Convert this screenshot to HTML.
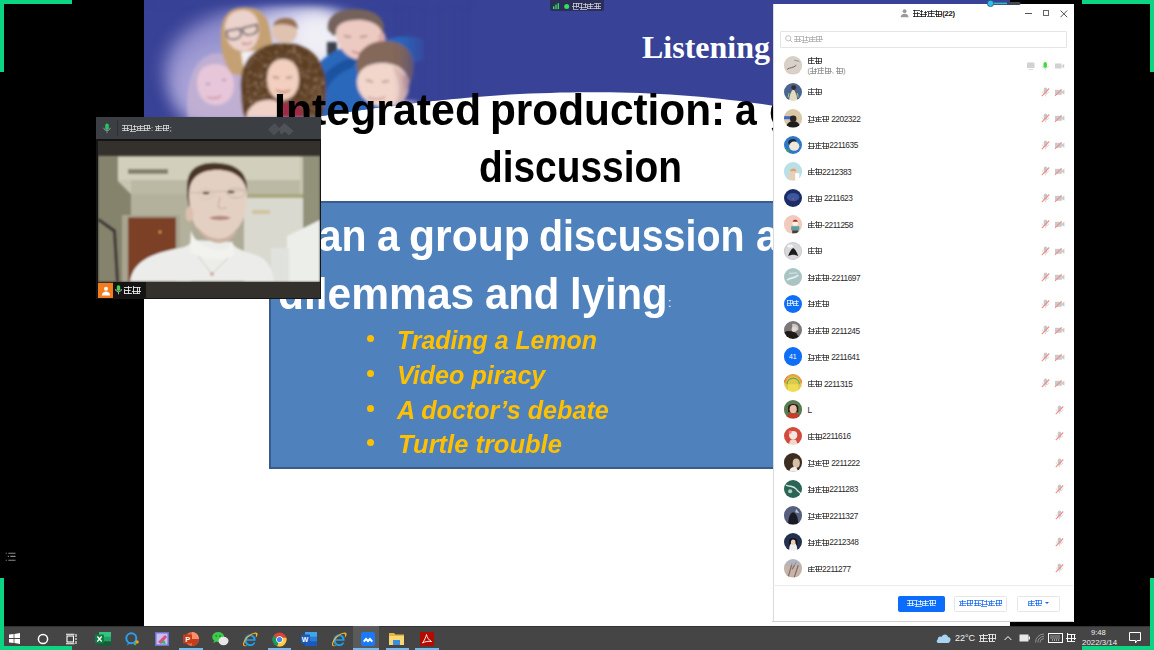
<!DOCTYPE html>
<html><head><meta charset="utf-8">
<style>
*{margin:0;padding:0;box-sizing:border-box}
html,body{width:1154px;height:650px;overflow:hidden;background:#000;font-family:"Liberation Sans",sans-serif}
.abs{position:absolute}
#slide{position:absolute;left:144px;top:0;width:866px;height:626px;background:#fff;overflow:hidden}
.g{position:absolute;background:#0bd582}
#taskbar{position:absolute;left:0;top:626px;width:1154px;height:24px;background:#454545}
#panel{position:absolute;left:773px;top:4px;width:301px;height:618px;background:#fff;box-shadow:inset 1px 0 0 #dadada}
#cam{position:absolute;left:96px;top:117px;width:225px;height:182px;background:#151515}
.t{position:absolute;white-space:nowrap;line-height:1}
.w{position:absolute;white-space:nowrap;line-height:1;transform-origin:0 0}
.dot{position:absolute;left:223px;width:7.2px;height:7.2px;border-radius:50%;background:#ffc000}
#panel .abs{position:absolute}
.pt{position:absolute;white-space:nowrap;line-height:1}
.c{display:inline-block;width:0.96em;height:0.9em;margin-right:0.02em;vertical-align:-0.05em;font-style:normal}
.c0{background:linear-gradient(currentColor,currentColor) 0 0.05em/100% 0.095em no-repeat,linear-gradient(currentColor,currentColor) 0 0.42em/100% 0.095em no-repeat,linear-gradient(currentColor,currentColor) 0 0.78em/100% 0.1em no-repeat,linear-gradient(currentColor,currentColor) 0.25em 0/0.1em 100% no-repeat,linear-gradient(currentColor,currentColor) 0.62em 0.2em/0.1em 80% no-repeat}
.c1{background:linear-gradient(currentColor,currentColor) 0.05em 0.1em/85% 0.095em no-repeat,linear-gradient(currentColor,currentColor) 0 0.5em/100% 0.095em no-repeat,linear-gradient(currentColor,currentColor) 0.1em 0.8em/80% 0.095em no-repeat,linear-gradient(currentColor,currentColor) 0.1em 0/0.1em 100% no-repeat,linear-gradient(currentColor,currentColor) 0.48em 0.1em/0.1em 90% no-repeat,linear-gradient(currentColor,currentColor) 0.78em 0.1em/0.1em 70% no-repeat}
.c2{background:linear-gradient(currentColor,currentColor) 0 0.15em/100% 0.095em no-repeat,linear-gradient(currentColor,currentColor) 0.2em 0.45em/70% 0.095em no-repeat,linear-gradient(currentColor,currentColor) 0 0.79em/100% 0.095em no-repeat,linear-gradient(currentColor,currentColor) 0.45em 0/0.1em 100% no-repeat,linear-gradient(currentColor,currentColor) 0.1em 0.3em/0.1em 60% no-repeat}
.c3{background:linear-gradient(currentColor,currentColor) 0 0.08em/45% 0.095em no-repeat,linear-gradient(currentColor,currentColor) 0.5em 0.2em/50% 0.095em no-repeat,linear-gradient(currentColor,currentColor) 0 0.55em/100% 0.095em no-repeat,linear-gradient(currentColor,currentColor) 0.05em 0.82em/90% 0.1em no-repeat,linear-gradient(currentColor,currentColor) 0.2em 0/0.1em 100% no-repeat,linear-gradient(currentColor,currentColor) 0.7em 0.1em/0.1em 85% no-repeat}
.av{position:absolute;left:10.6px;width:18.4px;height:18.4px;border-radius:50%;overflow:hidden}
.btn{position:absolute;height:16px;border:1px solid #e6e6e6;border-radius:1.5px;font-size:7.4px;line-height:14px;text-align:center;white-space:nowrap}
.dg{font-size:8.3px;letter-spacing:-0.45px;color:#2a2a2a}
</style></head><body>
<div id="slide">
  <svg class="abs" style="left:0;top:0" width="866" height="300" viewBox="144 0 866 300">
    <defs>
      <filter id="b3" x="-50%" y="-50%" width="200%" height="200%"><feGaussianBlur stdDeviation="3"/></filter>
      <filter id="b8" x="-50%" y="-50%" width="200%" height="200%"><feGaussianBlur stdDeviation="9"/></filter>
      <filter id="b1" x="-50%" y="-50%" width="200%" height="200%"><feGaussianBlur stdDeviation="1.5"/></filter>
      <clipPath id="hdr"><path d="M144 0 H1010 V172.2 L1010 172.2 L1000 168.1 L990 164.1 L980 160.2 L970 156.5 L960 152.9 L950 149.4 L940 146.0 L930 142.7 L920 139.6 L910 136.5 L900 133.6 L890 130.8 L880 128.1 L870 125.5 L860 123.0 L850 120.6 L840 118.3 L830 116.1 L820 114.1 L810 112.1 L800 110.2 L790 108.5 L780 106.8 L770 105.2 L760 103.7 L750 102.4 L740 101.1 L730 99.9 L720 98.8 L710 97.7 L700 96.8 L690 96.0 L680 95.2 L670 94.6 L660 94.0 L650 93.5 L640 93.1 L630 92.7 L620 92.5 L610 92.3 L600 92.2 L590 92.2 L580 92.3 L570 92.4 L560 92.6 L550 92.9 L540 93.2 L530 93.6 L520 94.1 L510 94.6 L500 95.3 L490 95.9 L480 96.7 L470 97.5 L460 98.4 L450 99.3 L440 100.3 L430 101.3 L420 102.4 L410 103.6 L400 104.8 L390 106.1 L380 107.4 L370 108.8 L360 110.2 L350 111.7 L340 113.2 L330 114.7 L320 116.3 L310 118.0 L300 119.7 L290 121.4 L280 123.2 L270 125.0 L260 126.9 L250 128.8 L240 130.7 L230 132.7 L220 134.7 L210 136.7 L200 138.8 L190 140.8 L180 143.0 L170 145.1 L160 147.3 L150 149.5 L144 150.8 Z"/></clipPath>
    </defs>
    <path d="M144 0 H1010 V172.2 L1010 172.2 L1000 168.1 L990 164.1 L980 160.2 L970 156.5 L960 152.9 L950 149.4 L940 146.0 L930 142.7 L920 139.6 L910 136.5 L900 133.6 L890 130.8 L880 128.1 L870 125.5 L860 123.0 L850 120.6 L840 118.3 L830 116.1 L820 114.1 L810 112.1 L800 110.2 L790 108.5 L780 106.8 L770 105.2 L760 103.7 L750 102.4 L740 101.1 L730 99.9 L720 98.8 L710 97.7 L700 96.8 L690 96.0 L680 95.2 L670 94.6 L660 94.0 L650 93.5 L640 93.1 L630 92.7 L620 92.5 L610 92.3 L600 92.2 L590 92.2 L580 92.3 L570 92.4 L560 92.6 L550 92.9 L540 93.2 L530 93.6 L520 94.1 L510 94.6 L500 95.3 L490 95.9 L480 96.7 L470 97.5 L460 98.4 L450 99.3 L440 100.3 L430 101.3 L420 102.4 L410 103.6 L400 104.8 L390 106.1 L380 107.4 L370 108.8 L360 110.2 L350 111.7 L340 113.2 L330 114.7 L320 116.3 L310 118.0 L300 119.7 L290 121.4 L280 123.2 L270 125.0 L260 126.9 L250 128.8 L240 130.7 L230 132.7 L220 134.7 L210 136.7 L200 138.8 L190 140.8 L180 143.0 L170 145.1 L160 147.3 L150 149.5 L144 150.8 Z" fill="#384296"/>
    <g clip-path="url(#hdr)">
      <filter id="curl" x="0" y="0" width="100%" height="100%"><feTurbulence type="turbulence" baseFrequency="0.28" numOctaves="2" seed="7"/><feColorMatrix values="0 0 0 0 0.78  0 0 0 0 0.6  0 0 0 0 0.42  0 0 0 3 -0.9"/><feComposite in2="SourceGraphic" operator="in"/></filter>
      <!-- glow -->
      <ellipse cx="265" cy="70" rx="100" ry="62" fill="#9c98d4" filter="url(#b8)" opacity="0.9"/>
      <ellipse cx="300" cy="45" rx="62" ry="38" fill="#d2d0ec" filter="url(#b8)"/>
      <ellipse cx="318" cy="38" rx="28" ry="26" fill="#f0eff6" filter="url(#b8)"/>
      <ellipse cx="235" cy="90" rx="62" ry="45" fill="#a8a2d6" filter="url(#b8)"/>
      <g filter="url(#b1)">
      <!-- blonde girl left (faded) -->
      <path d="M188 117 C185 92 190 60 212 54 C232 50 243 66 244 92 L246 117 Z" fill="#c8b4d2" opacity="0.75"/>
      <path d="M197 82 C197 70 205 64 215 64 C227 64 234 72 234 85 C234 98 226 105 216 105 C205 105 197 96 197 82Z" fill="#e6c6d8"/>
      <path d="M207 97 C211 99 217 99 221 96" stroke="#c07888" stroke-width="1.1" fill="none"/>
      <ellipse cx="208" cy="84" rx="2" ry="0.9" fill="#9a88b8"/><ellipse cx="224" cy="80" rx="2" ry="0.9" fill="#9a88b8"/>
      <!-- glasses girl -->
      <path d="M244 7 C230 7 222 16 221 32 C220 48 223 62 232 74 L246 76 L262 90 L272 80 C274 62 273 42 269 25 C266 13 257 7 244 7Z" fill="#c4a072"/>
      <path d="M225 28 C225 16 234 10 243 10 C253 10 259 18 259 30 C259 43 252 51 243 51 C233 51 225 42 225 28Z" fill="#ecd2cc"/>
      <path d="M226.5 31 L240 28.5 L241 35 C239.5 39 232 40.5 229 38.5 C227 37 226.5 34 226.5 31Z M242.5 28 L257 24.5 L257.5 30 C256.5 34 250 35.5 246 34.5 C243.5 33.5 242.5 31 242.5 28Z" fill="none" stroke="#3a3840" stroke-width="1.5" stroke-linejoin="round"/>
      <path d="M242 43 C245 44.5 249 44.5 252 42" stroke="#c86a74" stroke-width="1.4" fill="none"/>
      <path d="M241 52 L262 50 L266 84 L246 84Z" fill="#f4f0f4"/>
      <!-- background person -->
      <path d="M272 32 C272 23 278 19 285 19 C293 19 297 24 297 32 C297 40 291 43 285 43 C278 43 272 39 272 32Z" fill="#e0c2b0"/>
      <path d="M273 26 C275 19 281 18 287 18 C294 18 297 22 298 29 C291 24 280 23 273 26Z" fill="#946e54"/>
      <!-- monitor -->
      <rect x="327" y="42" width="10" height="13" fill="#3a3e4a"/>
      <!-- boy 1 shirt -->
      <path d="M298 117 C300 92 310 66 330 54 C346 44 364 42 384 40 C398 36 412 34 424 40 L424 60 C410 62 400 74 396 90 L392 117 Z" fill="#2a68bc"/>
      <path d="M320 80 C330 66 344 58 360 56 L352 68 C340 72 330 80 326 92Z" fill="#1c52a0"/>
      <!-- boy 1 head -->
      <path d="M328 30 C326 17 337 9 355 9 C371 9 383 15 384 27 C384 33 382 38 380 40 C376 32 368 27 358 27 C348 27 340 30 334 36 Z" fill="#74625c"/>
      <path d="M336 32 C336 24 345 20 358 20 C372 20 383 26 383 38 C383 50 374 60 361 60 C347 60 336 46 336 32Z" fill="#eccac2"/>
      <ellipse cx="382" cy="38" rx="3.5" ry="6" fill="#d8aaa6"/>
      <path d="M344 36 L351 37 M360 37 L367 36" stroke="#5a4040" stroke-width="1" fill="none"/>
      <path d="M352 51 C356 54 362 54 366 51" stroke="#b06060" stroke-width="1.1" fill="none"/>
      <!-- curly girl -->
      <path d="M241 92 C238 62 254 43 284 43 C312 43 327 62 326 90 C326 104 322 117 322 117 L244 117 C242 108 241 100 241 92Z" fill="#5c3e24"/>
      <path d="M241 92 C238 62 254 43 284 43 C312 43 327 62 326 90 C326 104 322 117 322 117 L244 117 C242 108 241 100 241 92Z" fill="#fff" filter="url(#curl)" opacity="0.5"/>
      <path d="M267 79 C267 67 273 59 283 59 C293 59 299 67 299 79 C299 92 292 100 283 100 C274 100 267 92 267 79Z" fill="#f2cfbe"/>
      <path d="M273 77 L279 78 M286 78 L292 77" stroke="#5a3a30" stroke-width="1" fill="none"/>
      <path d="M276 90 C280 93 286 93 290 90" stroke="#b05050" stroke-width="1.3" fill="none"/>
      <path d="M260 104 L300 102 L303 117 L258 117Z" fill="#9e2a46"/>
      <path d="M247 113 C251 104 260 99 272 100 C280 101 283 107 280 117 L247 117Z" fill="#f0d2c6"/>
      <!-- boy 2 -->
      <path d="M357 70 C354 54 366 41 385 41 C403 41 414 51 414 66 C414 74 412 80 410 84 C406 72 398 64 386 63 C374 62 364 66 359 76 Z" fill="#84685a"/>
      <path d="M357 82 C357 70 367 63 383 63 C399 63 409 72 409 86 C409 99 399 107 386 107 C370 107 357 96 357 82Z" fill="#f2d6cc"/><path d="M392 66 C402 70 409 78 409 88 C409 98 402 104 394 106 C400 98 402 86 392 66Z" fill="#dcb4aa" opacity="0.7"/>
      <path d="M402 76 C410 73 413 86 405 92Z" fill="#d8a8a0"/>
      <path d="M366 80 L373 82 M382 82 L389 81" stroke="#6a4a40" stroke-width="1" fill="none"/>
      <path d="M368 97 C373 100 380 100 385 97" stroke="#b06868" stroke-width="1.1" fill="none"/>
      <path d="M395 104 C405 98 420 98 426 106 L428 117 L392 117Z" fill="#b4acd8"/>
      </g>
      <!-- fade right side into blue -->
      <rect x="412" y="-10" width="40" height="140" fill="#384296" filter="url(#b8)" opacity="0.85"/>
      <rect x="150" y="-20" width="320" height="24" fill="#384296" filter="url(#b3)" opacity="0.9"/>
    </g>
  </svg>
  <!--TEXT-->
  <div class="t" style="left:498px;top:31.3px;font-family:'Liberation Serif',serif;font-size:32px;font-weight:bold;color:#fff">Listening and Speaking</div>
  <div class="abs" style="left:125.2px;top:200.8px;width:760px;height:267.8px;background:#4f81bd;border:2.3px solid #385d8a"></div>
  <span class="w" style="left:129.9px;top:86.9px;font-size:45px;color:#000;transform:scaleX(0.952);font-weight:bold">Integrated</span>
  <span class="w" style="left:346.0px;top:86.9px;font-size:45px;color:#000;transform:scaleX(0.941);font-weight:bold">production:</span>
  <span class="w" style="left:591.0px;top:86.9px;font-size:45px;color:#000;transform:scaleX(0.870);font-weight:bold">a</span>
  <span class="w" style="left:624.5px;top:86.9px;font-size:45px;color:#000;transform:scaleX(0.924);font-weight:bold">group</span>
  <span class="w" style="left:334.7px;top:143.5px;font-size:45px;color:#000;transform:scaleX(0.863);font-weight:bold">discussion</span>
  <span class="w" style="left:136.0px;top:212.5px;font-size:45px;color:#fff;transform:scaleX(0.910);font-weight:bold">Plan</span>
  <span class="w" style="left:233.2px;top:212.5px;font-size:45px;color:#fff;transform:scaleX(0.904);font-weight:bold">a</span>
  <span class="w" style="left:265.0px;top:212.5px;font-size:45px;color:#fff;transform:scaleX(0.948);font-weight:bold">group</span>
  <span class="w" style="left:394.8px;top:212.5px;font-size:45px;color:#fff;transform:scaleX(0.874);font-weight:bold">discussion</span>
  <span class="w" style="left:612.4px;top:212.5px;font-size:45px;color:#fff;transform:scaleX(0.910);font-weight:bold">about</span>
  <span class="w" style="left:133.6px;top:271.3px;font-size:45px;color:#fff;transform:scaleX(0.945);font-weight:bold">dilemmas</span>
  <span class="w" style="left:340.7px;top:271.3px;font-size:45px;color:#fff;transform:scaleX(0.930);font-weight:bold">and</span>
  <span class="w" style="left:426.3px;top:271.3px;font-size:45px;color:#fff;transform:scaleX(0.930);font-weight:bold">lying</span>
  <span class="w" style="left:524px;top:297px;font-size:12px;color:#fff">:</span>
  <span class="dot" style="top:334.9px"></span>
  <span class="w" style="left:253.4px;top:328.3px;font-size:25px;color:#ffc000;transform:scaleX(0.995);font-weight:bold;font-style:italic">Trading a Lemon</span>
  <span class="dot" style="top:369.8px"></span>
  <span class="w" style="left:253.4px;top:362.6px;font-size:25px;color:#ffc000;transform:scaleX(1.004);font-weight:bold;font-style:italic">Video piracy</span>
  <span class="dot" style="top:404.5px"></span>
  <span class="w" style="left:252.7px;top:397.9px;font-size:25px;color:#ffc000;transform:scaleX(1.005);font-weight:bold;font-style:italic">A doctor&#8217;s debate</span>
  <span class="dot" style="top:439.2px"></span>
  <span class="w" style="left:253.9px;top:432.2px;font-size:25px;color:#ffc000;transform:scaleX(1.020);font-weight:bold;font-style:italic">Turtle trouble</span>
  <!--/TEXT--><!--/TEXT--></div>
<div id="pill" class="abs" style="left:550.4px;top:0;width:53.7px;height:11.4px;background:#2b2e58;border-radius:0 0 2.5px 2.5px"></div>
<svg class="abs" style="left:552px;top:2px" width="18" height="9" viewBox="0 0 18 9"><g fill="#2ee05a"><rect x="1" y="4.3" width="1.4" height="2.8"/><rect x="3.3" y="2.6" width="1.4" height="4.5"/><rect x="5.6" y="1.2" width="1.4" height="5.9"/><circle cx="14.7" cy="4.6" r="2.5"/></g></svg>
<div class="pt" style="left:572.2px;top:2.6px;font-size:7.4px;color:#d8d8e0"><i class="c c1"></i><i class="c c3"></i><i class="c c2"></i><i class="c c0"></i></div>
<svg id="listicon" class="abs" style="left:4px;top:550px" width="14" height="13" viewBox="4 550 14 13"><g stroke="#8a8a8a" stroke-width="1.1"><path d="M5.7 553.2 H6.8 M8.3 553.2 H15.5 M7.8 556.4 H8.9 M10.3 556.4 H15.5 M5.7 560.3 H6.8 M8.3 560.3 H15.5"/></g></svg>
<!--CAM-->
<div id="cam">
<div class="abs" style="left:0;top:0;width:225px;height:22px;background:#3b3e43"></div>
<svg class="abs" style="left:7px;top:6px" width="8" height="11" viewBox="0 0 8 11"><rect x="2.2" y="0.5" width="3.6" height="6.5" rx="1.8" fill="#22c55e"/><path d="M0.8 4.8 C0.8 8.4 7.2 8.4 7.2 4.8" fill="none" stroke="#9aa0a6" stroke-width="0.9"/><rect x="3.6" y="8.2" width="0.8" height="2" fill="#9aa0a6"/></svg>
<div class="abs" style="left:21px;top:3px;width:1px;height:16px;background:#2e3034"></div>
<div class="pt" style="left:26px;top:7.5px;font-size:7.4px;color:#e8e8e8"><i class="c c0"></i><i class="c c3"></i><i class="c c2"></i><i class="c c1"></i>: <i class="c c2"></i><i class="c c1"></i>;</div>
<svg class="abs" style="left:171px;top:4px" width="28" height="15" viewBox="0 0 28 15"><g fill="#505357" stroke="#505357" stroke-width="1.6" stroke-linejoin="round"><path d="M2 8.5 L7.5 3 L12.5 8 L7 13.5Z" opacity="0.85"/><path d="M12.5 8 L17.5 3 L25.5 10 L22 13.5 L17.5 9.5 L14.5 12.5Z"/></g></svg>
<div class="abs" style="left:0;top:22px;width:225px;height:2px;background:#141414"></div>
<div class="abs" style="left:2px;top:24px;width:222px;height:157px;background:#34302c;overflow:hidden">
<svg width="222" height="157" viewBox="98 141 222 157" style="position:absolute;left:0;top:0">
<defs><filter id="cb" x="-20%" y="-20%" width="140%" height="140%"><feGaussianBlur stdDeviation="1"/></filter>
<filter id="cb2" x="-20%" y="-20%" width="140%" height="140%"><feGaussianBlur stdDeviation="2.5"/></filter></defs>
<g filter="url(#cb)">
<rect x="98" y="156.5" width="222" height="125" fill="#aeab96"/>
<rect x="98" y="156.5" width="222" height="38" fill="#c8c5b0"/>
<path d="M98 156.5 L118 156.5 L118 181 L131 194 L131 281.5 L98 281.5 Z" fill="#85836c"/>
<path d="M118 156.5 L300 156.5 L300 180 L118 180 Z" fill="#d2cfbc"/>
<rect x="128" y="169" width="40" height="5" fill="#858170"/>
<path d="M131 180 L300 180 L300 194 L131 194 Z" fill="#bbb8a4"/>
<rect x="131" y="194" width="60" height="88" fill="#b3b09c"/>
<rect x="122" y="215" width="58" height="67" fill="#a8a490"/>
<rect x="128" y="217.5" width="48" height="64" fill="#7c4128"/>
<circle cx="160" cy="232" r="1.5" fill="#d89a50"/>
<rect x="244" y="194" width="60" height="88" fill="#dad9d0"/>
<rect x="244" y="194" width="60" height="4" fill="#a8a880"/>
<rect x="252" y="210" width="18" height="4" fill="#c8b878" opacity="0.6"/>
<rect x="303" y="156.5" width="17" height="125" fill="#92917a"/>
<path d="M287 236 L320 220 L320 282 L287 282Z" fill="#eceeea"/>
<rect x="271" y="248" width="18" height="34" fill="#e0e2de"/>
<path d="M98 221 L113 232 L116 281.5 L119 281.5 L116 230 L99 218 Z" fill="#3c3034"/>
<path d="M130 281.5 C133 264 146 254 180 248 C186 247 190 245 192 240 L232 242 C234 250 250 252 262 258 C270 264 273 272 274 281.5 Z" fill="#ecedea"/>
<path d="M191 230 C194 244 210 250 220 250 C228 250 232 246 232 240 L234 256 C220 262 204 260 190 252 Z" fill="#f2f2ee"/>
<path d="M188 178 C191 166 204 162 218 163 C236 164 247 172 247 188 L246 198 C240 186 232 180 218 180 C204 180 196 186 192 198 L190 210 C187 200 186 188 188 178Z" fill="#4a3426"/>
<path d="M189 194 C189 178 200 170 217 170 C236 170 247 180 247 196 C247 211 243 222 237 229 C231 236 225 239 219 239 C210 239 202 234 196 227 C191 219 189 207 189 194Z" fill="#e4d0c2"/>
<path d="M196 225 C202 234 212 239 219 239 C226 239 232 235 236 229 L236 234 C230 241 224 243 219 243 C210 243 200 236 196 225Z" fill="#ccb2a2"/>
<ellipse cx="189.5" cy="214" rx="4" ry="7.5" fill="#dcc0ae"/>
<path d="M190 193 L249 190" stroke="#bcae9e" stroke-width="0.7" fill="none"/><ellipse cx="206" cy="194" rx="8" ry="5" fill="none" stroke="#c8bcb0" stroke-width="0.6"/><ellipse cx="236" cy="193" rx="9" ry="5" fill="none" stroke="#b8b0a8" stroke-width="0.8"/>
<ellipse cx="206" cy="193" rx="3.5" ry="1.3" fill="#4a3a34"/>
<ellipse cx="231" cy="192" rx="3.5" ry="1.3" fill="#4a3a34"/>
<path d="M220 197 L218 207 C220 209 225 209 227 207" stroke="#c4a494" stroke-width="1" fill="none"/>
<path d="M209 218 C215 215 225 215 231 218 C225 221 215 221 209 218Z" fill="#b68880"/>
<path d="M198 256 L212 274 L228 258" stroke="#c0a898" stroke-width="0.6" fill="none"/>
<circle cx="212" cy="274" r="2" fill="#d4a4a0"/>
</g>
</svg>
</div>
<div class="abs" style="left:2px;top:164.5px;width:222px;height:16.5px;background:#34302c"></div>
<div class="abs" style="left:2px;top:166px;width:15px;height:15px;background:#f47c20"></div>
<svg class="abs" style="left:4.5px;top:168.5px" width="10" height="10" viewBox="0 0 10 10"><circle cx="5" cy="2.8" r="2" fill="#fff"/><path d="M0.8 9.6 C1.2 6.6 3 5.6 5 5.6 C7 5.6 8.8 6.6 9.2 9.6 Z" fill="#fff"/></svg>
<div class="abs" style="left:17px;top:165px;width:33px;height:16px;background:#141414"></div>
<svg class="abs" style="left:18.5px;top:168px" width="7" height="10" viewBox="0 0 7 10"><rect x="1.8" y="0.3" width="3.4" height="5.6" rx="1.6" fill="#3fd84a"/><path d="M0.6 4.2 C0.6 7.6 6.4 7.6 6.4 4.2" fill="none" stroke="#ddd" stroke-width="0.9"/><rect x="3.1" y="7.1" width="0.8" height="2.2" fill="#ddd"/></svg>
<div class="pt" style="left:27.5px;top:169px;font-size:9px;color:#f0f0f0"><i class="c c2"></i><i class="c c1"></i></div>
</div>
<!--/CAM-->
<!--PANEL-->
<div id="panel">
<svg class="abs" style="left:127px;top:5px" width="10" height="9" viewBox="0 0 10 9"><circle cx="4.6" cy="2.2" r="1.9" fill="#9a9a9a"/><path d="M0.6 8.2 C1 5.6 2.6 4.8 4.6 4.8 C6.6 4.8 8.2 5.6 8.6 8.2 Z" fill="#9a9a9a"/></svg>
<div class="pt" style="left:139.5px;top:6px;font-size:7.6px;color:#111;font-weight:bold"><i class="c c0"></i><i class="c c3"></i><i class="c c2"></i><i class="c c1"></i><span style="letter-spacing:-0.2px">(22)</span></div>
<div class="abs" style="left:252px;top:9px;width:7px;height:1px;background:#555"></div>
<div class="abs" style="left:269.5px;top:6px;width:6.5px;height:6.2px;border:1px solid #666"></div>
<svg class="abs" style="left:287px;top:6px" width="8" height="8" viewBox="0 0 8 8"><path d="M0.5 0.5 L7.2 7.2 M7.2 0.5 L0.5 7.2" stroke="#555" stroke-width="1"/></svg>
<div class="abs" style="left:7.4px;top:27.2px;width:287px;height:17.3px;border:1px solid #e4e4e4;border-radius:1px"></div>
<svg class="abs" style="left:11.5px;top:31px" width="8" height="8" viewBox="0 0 8 8"><circle cx="3.3" cy="3.3" r="2.6" fill="none" stroke="#b8b8b8" stroke-width="0.9"/><path d="M5.2 5.2 L7.3 7.3" stroke="#b8b8b8" stroke-width="0.9"/></svg>
<div class="pt" style="left:21px;top:31.5px;font-size:7.4px;color:#a8a8a8"><i class="c c0"></i><i class="c c3"></i><i class="c c2"></i><i class="c c1"></i></div>
<div class="av" style="left:10.6px;top:52.30px"><svg width="18.4" height="18.4" viewBox="0 0 18 18" style="display:block;filter:blur(0.35px)"><rect width="18" height="18" fill="#d8d0ca"/><path d="M3 13 C6 11 9 12 12 9" stroke="#6a5a50" stroke-width="0.9" fill="none"/><path d="M10 4 C12 5 14 4 15 6" stroke="#8a7a70" stroke-width="0.8" fill="none"/><circle cx="9" cy="9" r="8.6" fill="none" stroke="#e8c890" stroke-width="0.6" opacity="0.6"/></svg></div>
<div class="pt" style="left:34.6px;top:53.10px;font-size:7.4px;color:#1e1e1e"><i class="c c2"></i><i class="c c1"></i></div>
<div class="pt" style="left:34.6px;top:63.10px;font-size:7.4px;color:#8a8a8a">(<i class="c c3"></i><i class="c c2"></i><i class="c c1"></i>, <i class="c c1"></i>)</div>
<svg class="abs" style="left:253px;top:57.50px" width="40" height="10" viewBox="0 0 40 10"><rect x="1" y="0.5" width="7.5" height="5.5" rx="0.6" fill="#d2d2d2"/><rect x="2.5" y="7.2" width="4.5" height="0.8" fill="#d2d2d2"/><rect x="17.5" y="0" width="3.4" height="6" rx="1.7" fill="#3ddc3d"/><path d="M16 4 C16 7 22.4 7 22.4 4" fill="none" stroke="#d0d0d0" stroke-width="0.8"/><rect x="19" y="7" width="0.6" height="1.6" fill="#d0d0d0"/><rect x="29" y="1.5" width="6.5" height="5" fill="#d2d2d2"/><path d="M35.5 3.8 L38.2 1.8 V6.6 L35.5 4.6Z" fill="#d2d2d2"/></svg>
<div class="av" style="left:10.6px;top:78.77px"><svg width="18.4" height="18.4" viewBox="0 0 18 18" style="display:block;filter:blur(0.35px)"><rect width="18" height="18" fill="#4a6690"/><path d="M5 18 C5 12 7 8 9 6 C11 8 13 12 13 18Z" fill="#e4dcc0"/><circle cx="9.5" cy="4.5" r="2.4" fill="#3a2a2a"/><path d="M5 10 L4 14 M13 10 L14 14" stroke="#a8c860" stroke-width="1"/></svg></div>
<div class="pt" style="left:34.6px;top:84.37px;font-size:7.4px;color:#333"><i class="c c2"></i><i class="c c1"></i></div>
<svg class="abs" style="left:268px;top:82.97px" width="27" height="11" viewBox="0 0 27 11"><rect x="2.7" y="0.5" width="3.6" height="6.2" rx="1.8" fill="#c6c9cc"/><path d="M1.2 4.5 C1.2 7.8 7.8 7.8 7.8 4.5" fill="none" stroke="#cdd0d2" stroke-width="0.9"/><rect x="4.1" y="7.5" width="0.8" height="1.8" fill="#cdd0d2"/><path d="M0.8 9.2 L8.2 1.5" stroke="#f88a84" stroke-width="1.1"/><rect x="14" y="2.8" width="6.8" height="5" fill="#c8cacc"/><path d="M20.5 4.8 L23.4 2.6 V7.8 L20.5 5.8Z" fill="#c8cacc"/><path d="M14 8.8 L20.6 2.3" stroke="#f88a84" stroke-width="1.1"/></svg>
<div class="av" style="left:10.6px;top:105.24px"><svg width="18.4" height="18.4" viewBox="0 0 18 18" style="display:block;filter:blur(0.35px)"><rect width="18" height="18" fill="#d8c8a8"/><rect x="0" y="7" width="8" height="3" fill="#3a6ad0"/><path d="M2 18 C3 13 6 12 9 12 C12 12 15 13 16 18Z" fill="#1e1e1e"/><circle cx="9" cy="9.5" r="3.2" fill="#2a2420"/></svg></div>
<div class="pt" style="left:34.6px;top:110.84px;font-size:7.4px;color:#333"><i class="c c3"></i><i class="c c2"></i><i class="c c1"></i><span class="dg"> 2202322</span></div>
<svg class="abs" style="left:268px;top:109.44px" width="27" height="11" viewBox="0 0 27 11"><rect x="2.7" y="0.5" width="3.6" height="6.2" rx="1.8" fill="#c6c9cc"/><path d="M1.2 4.5 C1.2 7.8 7.8 7.8 7.8 4.5" fill="none" stroke="#cdd0d2" stroke-width="0.9"/><rect x="4.1" y="7.5" width="0.8" height="1.8" fill="#cdd0d2"/><path d="M0.8 9.2 L8.2 1.5" stroke="#f88a84" stroke-width="1.1"/><rect x="14" y="2.8" width="6.8" height="5" fill="#c8cacc"/><path d="M20.5 4.8 L23.4 2.6 V7.8 L20.5 5.8Z" fill="#c8cacc"/><path d="M14 8.8 L20.6 2.3" stroke="#f88a84" stroke-width="1.1"/></svg>
<div class="av" style="left:10.6px;top:131.71px"><svg width="18.4" height="18.4" viewBox="0 0 18 18" style="display:block;filter:blur(0.35px)"><rect width="18" height="18" fill="#2f78c8"/><path d="M4 6 C5 3 9 2 12 4 L12 8 L5 9Z" fill="#1e2a3a"/><ellipse cx="10" cy="10" rx="5" ry="4.5" fill="#f0e8d8"/><rect x="0" y="13" width="5" height="5" fill="#3aa060"/></svg></div>
<div class="pt" style="left:34.6px;top:137.31px;font-size:7.4px;color:#333"><i class="c c3"></i><i class="c c2"></i><i class="c c1"></i><span class="dg">2211635</span></div>
<svg class="abs" style="left:268px;top:135.91px" width="27" height="11" viewBox="0 0 27 11"><rect x="2.7" y="0.5" width="3.6" height="6.2" rx="1.8" fill="#c6c9cc"/><path d="M1.2 4.5 C1.2 7.8 7.8 7.8 7.8 4.5" fill="none" stroke="#cdd0d2" stroke-width="0.9"/><rect x="4.1" y="7.5" width="0.8" height="1.8" fill="#cdd0d2"/><path d="M0.8 9.2 L8.2 1.5" stroke="#f88a84" stroke-width="1.1"/><rect x="14" y="2.8" width="6.8" height="5" fill="#c8cacc"/><path d="M20.5 4.8 L23.4 2.6 V7.8 L20.5 5.8Z" fill="#c8cacc"/><path d="M14 8.8 L20.6 2.3" stroke="#f88a84" stroke-width="1.1"/></svg>
<div class="av" style="left:10.6px;top:158.18px"><svg width="18.4" height="18.4" viewBox="0 0 18 18" style="display:block;filter:blur(0.35px)"><rect width="18" height="18" fill="#b8e0e8"/><path d="M5 18 C4 12 5 6 9 5 C13 5 14 10 13 18Z" fill="#e8d0b8"/><path d="M6 9 C6 6 12 5 12 9" fill="#c8a888"/><rect x="11" y="11" width="4" height="7" fill="#ffffff"/></svg></div>
<div class="pt" style="left:34.6px;top:163.78px;font-size:7.4px;color:#333"><i class="c c2"></i><i class="c c1"></i><span class="dg">2212383</span></div>
<svg class="abs" style="left:268px;top:162.38px" width="27" height="11" viewBox="0 0 27 11"><rect x="2.7" y="0.5" width="3.6" height="6.2" rx="1.8" fill="#c6c9cc"/><path d="M1.2 4.5 C1.2 7.8 7.8 7.8 7.8 4.5" fill="none" stroke="#cdd0d2" stroke-width="0.9"/><rect x="4.1" y="7.5" width="0.8" height="1.8" fill="#cdd0d2"/><path d="M0.8 9.2 L8.2 1.5" stroke="#f88a84" stroke-width="1.1"/><rect x="14" y="2.8" width="6.8" height="5" fill="#c8cacc"/><path d="M20.5 4.8 L23.4 2.6 V7.8 L20.5 5.8Z" fill="#c8cacc"/><path d="M14 8.8 L20.6 2.3" stroke="#f88a84" stroke-width="1.1"/></svg>
<div class="av" style="left:10.6px;top:184.65px"><svg width="18.4" height="18.4" viewBox="0 0 18 18" style="display:block;filter:blur(0.35px)"><rect width="18" height="18" fill="#1c2c64"/><ellipse cx="9" cy="8" rx="6" ry="4" fill="#3a58a0"/><circle cx="9" cy="9.5" r="1" fill="#c04060"/></svg></div>
<div class="pt" style="left:34.6px;top:190.25px;font-size:7.4px;color:#333"><i class="c c2"></i><i class="c c1"></i><span class="dg"> 2211623</span></div>
<svg class="abs" style="left:268px;top:188.85px" width="27" height="11" viewBox="0 0 27 11"><rect x="2.7" y="0.5" width="3.6" height="6.2" rx="1.8" fill="#c6c9cc"/><path d="M1.2 4.5 C1.2 7.8 7.8 7.8 7.8 4.5" fill="none" stroke="#cdd0d2" stroke-width="0.9"/><rect x="4.1" y="7.5" width="0.8" height="1.8" fill="#cdd0d2"/><path d="M0.8 9.2 L8.2 1.5" stroke="#f88a84" stroke-width="1.1"/><rect x="14" y="2.8" width="6.8" height="5" fill="#c8cacc"/><path d="M20.5 4.8 L23.4 2.6 V7.8 L20.5 5.8Z" fill="#c8cacc"/><path d="M14 8.8 L20.6 2.3" stroke="#f88a84" stroke-width="1.1"/></svg>
<div class="av" style="left:10.6px;top:211.12px"><svg width="18.4" height="18.4" viewBox="0 0 18 18" style="display:block;filter:blur(0.35px)"><rect width="18" height="18" fill="#f0cabc"/><circle cx="11" cy="8" r="2.6" fill="#fff0e0"/><path d="M8.5 6.5 C9 4 13 4 13.5 6.5Z" fill="#b02828"/><rect x="7" y="11" width="8" height="4" fill="#5aa0a0"/><rect x="8" y="15" width="6" height="3" fill="#404040"/></svg></div>
<div class="pt" style="left:34.6px;top:216.72px;font-size:7.4px;color:#333"><i class="c c2"></i><i class="c c1"></i><span class="dg">-2211258</span></div>
<svg class="abs" style="left:268px;top:215.32px" width="27" height="11" viewBox="0 0 27 11"><rect x="2.7" y="0.5" width="3.6" height="6.2" rx="1.8" fill="#c6c9cc"/><path d="M1.2 4.5 C1.2 7.8 7.8 7.8 7.8 4.5" fill="none" stroke="#cdd0d2" stroke-width="0.9"/><rect x="4.1" y="7.5" width="0.8" height="1.8" fill="#cdd0d2"/><path d="M0.8 9.2 L8.2 1.5" stroke="#f88a84" stroke-width="1.1"/><rect x="14" y="2.8" width="6.8" height="5" fill="#c8cacc"/><path d="M20.5 4.8 L23.4 2.6 V7.8 L20.5 5.8Z" fill="#c8cacc"/><path d="M14 8.8 L20.6 2.3" stroke="#f88a84" stroke-width="1.1"/></svg>
<div class="av" style="left:10.6px;top:237.59px"><svg width="18.4" height="18.4" viewBox="0 0 18 18" style="display:block;filter:blur(0.35px)"><rect width="18" height="18" fill="#c6c6ca"/><circle cx="9" cy="9" r="8" fill="#d8d8dc"/><path d="M4 14 C6 8 8 6 9 6 C10 6 12 8 14 14 C11 12 7 12 4 14Z" fill="#1a1a1a"/><ellipse cx="6" cy="4" rx="3" ry="1.6" fill="#f4f4f4"/></svg></div>
<div class="pt" style="left:34.6px;top:243.19px;font-size:7.4px;color:#333"><i class="c c2"></i><i class="c c1"></i></div>
<svg class="abs" style="left:268px;top:241.79px" width="27" height="11" viewBox="0 0 27 11"><rect x="2.7" y="0.5" width="3.6" height="6.2" rx="1.8" fill="#c6c9cc"/><path d="M1.2 4.5 C1.2 7.8 7.8 7.8 7.8 4.5" fill="none" stroke="#cdd0d2" stroke-width="0.9"/><rect x="4.1" y="7.5" width="0.8" height="1.8" fill="#cdd0d2"/><path d="M0.8 9.2 L8.2 1.5" stroke="#f88a84" stroke-width="1.1"/><rect x="14" y="2.8" width="6.8" height="5" fill="#c8cacc"/><path d="M20.5 4.8 L23.4 2.6 V7.8 L20.5 5.8Z" fill="#c8cacc"/><path d="M14 8.8 L20.6 2.3" stroke="#f88a84" stroke-width="1.1"/></svg>
<div class="av" style="left:10.6px;top:264.06px"><svg width="18.4" height="18.4" viewBox="0 0 18 18" style="display:block;filter:blur(0.35px)"><rect width="18" height="18" fill="#a8c4c4"/><path d="M3 12 C6 9 9 11 14 7" stroke="#e8f0f0" stroke-width="1.6" fill="none"/><path d="M5 5 C8 6 10 4 13 5" stroke="#d0e0e0" stroke-width="1.2" fill="none"/></svg></div>
<div class="pt" style="left:34.6px;top:269.66px;font-size:7.4px;color:#333"><i class="c c3"></i><i class="c c2"></i><i class="c c1"></i><span class="dg">-2211697</span></div>
<svg class="abs" style="left:268px;top:268.26px" width="27" height="11" viewBox="0 0 27 11"><rect x="2.7" y="0.5" width="3.6" height="6.2" rx="1.8" fill="#c6c9cc"/><path d="M1.2 4.5 C1.2 7.8 7.8 7.8 7.8 4.5" fill="none" stroke="#cdd0d2" stroke-width="0.9"/><rect x="4.1" y="7.5" width="0.8" height="1.8" fill="#cdd0d2"/><path d="M0.8 9.2 L8.2 1.5" stroke="#f88a84" stroke-width="1.1"/><rect x="14" y="2.8" width="6.8" height="5" fill="#c8cacc"/><path d="M20.5 4.8 L23.4 2.6 V7.8 L20.5 5.8Z" fill="#c8cacc"/><path d="M14 8.8 L20.6 2.3" stroke="#f88a84" stroke-width="1.1"/></svg>
<div class="av" style="left:10.6px;top:290.53px;background:#0f6ef6"><span style="font-size:7px;color:#fff;position:absolute;left:0;right:0;top:5.2px;text-align:center;line-height:8px"><i class="c c1" style="width:6px"></i><i class="c c2" style="width:6px"></i></span></div>
<div class="pt" style="left:34.6px;top:296.13px;font-size:7.4px;color:#333"><i class="c c3"></i><i class="c c2"></i><i class="c c1"></i></div>
<svg class="abs" style="left:268px;top:294.73px" width="27" height="11" viewBox="0 0 27 11"><rect x="2.7" y="0.5" width="3.6" height="6.2" rx="1.8" fill="#c6c9cc"/><path d="M1.2 4.5 C1.2 7.8 7.8 7.8 7.8 4.5" fill="none" stroke="#cdd0d2" stroke-width="0.9"/><rect x="4.1" y="7.5" width="0.8" height="1.8" fill="#cdd0d2"/><path d="M0.8 9.2 L8.2 1.5" stroke="#f88a84" stroke-width="1.1"/><rect x="14" y="2.8" width="6.8" height="5" fill="#c8cacc"/><path d="M20.5 4.8 L23.4 2.6 V7.8 L20.5 5.8Z" fill="#c8cacc"/><path d="M14 8.8 L20.6 2.3" stroke="#f88a84" stroke-width="1.1"/></svg>
<div class="av" style="left:10.6px;top:317.00px"><svg width="18.4" height="18.4" viewBox="0 0 18 18" style="display:block;filter:blur(0.35px)"><rect width="18" height="18" fill="#7a7878"/><path d="M8 3 C12 2 15 5 14 9 L8 10Z" fill="#c8c8c8"/><path d="M0 18 L0 11 C4 9 8 10 12 12 L16 18Z" fill="#1e1a1a"/><circle cx="10" cy="8" r="2.5" fill="#e8d8d0"/></svg></div>
<div class="pt" style="left:34.6px;top:322.60px;font-size:7.4px;color:#333"><i class="c c3"></i><i class="c c2"></i><i class="c c1"></i><span class="dg"> 2211245</span></div>
<svg class="abs" style="left:268px;top:321.20px" width="27" height="11" viewBox="0 0 27 11"><rect x="2.7" y="0.5" width="3.6" height="6.2" rx="1.8" fill="#c6c9cc"/><path d="M1.2 4.5 C1.2 7.8 7.8 7.8 7.8 4.5" fill="none" stroke="#cdd0d2" stroke-width="0.9"/><rect x="4.1" y="7.5" width="0.8" height="1.8" fill="#cdd0d2"/><path d="M0.8 9.2 L8.2 1.5" stroke="#f88a84" stroke-width="1.1"/><rect x="14" y="2.8" width="6.8" height="5" fill="#c8cacc"/><path d="M20.5 4.8 L23.4 2.6 V7.8 L20.5 5.8Z" fill="#c8cacc"/><path d="M14 8.8 L20.6 2.3" stroke="#f88a84" stroke-width="1.1"/></svg>
<div class="av" style="left:10.6px;top:343.47px;background:#0f6ef6"><span style="font-size:7px;color:#fff;position:absolute;left:0;right:0;top:5.2px;text-align:center;line-height:8px">41</span></div>
<div class="pt" style="left:34.6px;top:349.07px;font-size:7.4px;color:#333"><i class="c c3"></i><i class="c c2"></i><i class="c c1"></i><span class="dg"> 2211641</span></div>
<svg class="abs" style="left:268px;top:347.67px" width="27" height="11" viewBox="0 0 27 11"><rect x="2.7" y="0.5" width="3.6" height="6.2" rx="1.8" fill="#c6c9cc"/><path d="M1.2 4.5 C1.2 7.8 7.8 7.8 7.8 4.5" fill="none" stroke="#cdd0d2" stroke-width="0.9"/><rect x="4.1" y="7.5" width="0.8" height="1.8" fill="#cdd0d2"/><path d="M0.8 9.2 L8.2 1.5" stroke="#f88a84" stroke-width="1.1"/><rect x="14" y="2.8" width="6.8" height="5" fill="#c8cacc"/><path d="M20.5 4.8 L23.4 2.6 V7.8 L20.5 5.8Z" fill="#c8cacc"/><path d="M14 8.8 L20.6 2.3" stroke="#f88a84" stroke-width="1.1"/></svg>
<div class="av" style="left:10.6px;top:369.94px"><svg width="18.4" height="18.4" viewBox="0 0 18 18" style="display:block;filter:blur(0.35px)"><rect width="18" height="18" fill="#e0c850"/><path d="M0 8 A9 9 0 0 1 18 8" fill="none" stroke="#d84a3a" stroke-width="2.5"/><path d="M1.5 9 A7.5 7.5 0 0 1 16.5 9" fill="none" stroke="#f0a030" stroke-width="1.5"/><path d="M3 10 A6 6 0 0 1 15 10" fill="none" stroke="#60b050" stroke-width="1.2"/><rect x="4" y="10" width="10" height="8" fill="#f0dc50"/></svg></div>
<div class="pt" style="left:34.6px;top:375.54px;font-size:7.4px;color:#333"><i class="c c2"></i><i class="c c1"></i><span class="dg"> 2211315</span></div>
<svg class="abs" style="left:268px;top:374.14px" width="27" height="11" viewBox="0 0 27 11"><rect x="2.7" y="0.5" width="3.6" height="6.2" rx="1.8" fill="#c6c9cc"/><path d="M1.2 4.5 C1.2 7.8 7.8 7.8 7.8 4.5" fill="none" stroke="#cdd0d2" stroke-width="0.9"/><rect x="4.1" y="7.5" width="0.8" height="1.8" fill="#cdd0d2"/><path d="M0.8 9.2 L8.2 1.5" stroke="#f88a84" stroke-width="1.1"/><rect x="14" y="2.8" width="6.8" height="5" fill="#c8cacc"/><path d="M20.5 4.8 L23.4 2.6 V7.8 L20.5 5.8Z" fill="#c8cacc"/><path d="M14 8.8 L20.6 2.3" stroke="#f88a84" stroke-width="1.1"/></svg>
<div class="av" style="left:10.6px;top:396.41px"><svg width="18.4" height="18.4" viewBox="0 0 18 18" style="display:block;filter:blur(0.35px)"><rect width="18" height="18" fill="#5a7a50"/><path d="M4 7 C4 3 14 3 14 7 L14 12 L4 12Z" fill="#2a1a18"/><ellipse cx="9" cy="9" rx="3.5" ry="4" fill="#e8c0a8"/><path d="M2 18 C3 13 6 13 9 13 C12 13 15 13 16 18Z" fill="#c83a2a"/></svg></div>
<div class="pt" style="left:34.6px;top:402.01px;font-size:7.4px;color:#333"><span class="dg">L</span></div>
<svg class="abs" style="left:282px;top:400.61px" width="12" height="11" viewBox="0 0 12 11"><rect x="2.7" y="0.5" width="3.6" height="6.2" rx="1.8" fill="#c6c9cc"/><path d="M1.2 4.5 C1.2 7.8 7.8 7.8 7.8 4.5" fill="none" stroke="#cdd0d2" stroke-width="0.9"/><rect x="4.1" y="7.5" width="0.8" height="1.8" fill="#cdd0d2"/><path d="M0.8 9.2 L8.2 1.5" stroke="#f88a84" stroke-width="1.1"/></svg>
<div class="av" style="left:10.6px;top:422.88px"><svg width="18.4" height="18.4" viewBox="0 0 18 18" style="display:block;filter:blur(0.35px)"><rect width="18" height="18" fill="#d24a3c"/><circle cx="9" cy="8" r="4" fill="#f4e8e0"/><path d="M5 18 C5 13 7 12 9 12 C11 12 13 13 13 18Z" fill="#f0d8c8"/><circle cx="6" cy="5" r="1.5" fill="#e88878"/></svg></div>
<div class="pt" style="left:34.6px;top:428.48px;font-size:7.4px;color:#333"><i class="c c2"></i><i class="c c1"></i><span class="dg">2211616</span></div>
<svg class="abs" style="left:282px;top:427.08px" width="12" height="11" viewBox="0 0 12 11"><rect x="2.7" y="0.5" width="3.6" height="6.2" rx="1.8" fill="#c6c9cc"/><path d="M1.2 4.5 C1.2 7.8 7.8 7.8 7.8 4.5" fill="none" stroke="#cdd0d2" stroke-width="0.9"/><rect x="4.1" y="7.5" width="0.8" height="1.8" fill="#cdd0d2"/><path d="M0.8 9.2 L8.2 1.5" stroke="#f88a84" stroke-width="1.1"/></svg>
<div class="av" style="left:10.6px;top:449.35px"><svg width="18.4" height="18.4" viewBox="0 0 18 18" style="display:block;filter:blur(0.35px)"><rect width="18" height="18" fill="#3e2e22"/><ellipse cx="12" cy="10" rx="3.5" ry="4.5" fill="#d8c0a8"/><path d="M5 18 C6 14 9 13 12 14 L14 18Z" fill="#f0f0f0"/></svg></div>
<div class="pt" style="left:34.6px;top:454.95px;font-size:7.4px;color:#333"><i class="c c3"></i><i class="c c2"></i><i class="c c1"></i><span class="dg"> 2211222</span></div>
<svg class="abs" style="left:282px;top:453.55px" width="12" height="11" viewBox="0 0 12 11"><rect x="2.7" y="0.5" width="3.6" height="6.2" rx="1.8" fill="#c6c9cc"/><path d="M1.2 4.5 C1.2 7.8 7.8 7.8 7.8 4.5" fill="none" stroke="#cdd0d2" stroke-width="0.9"/><rect x="4.1" y="7.5" width="0.8" height="1.8" fill="#cdd0d2"/><path d="M0.8 9.2 L8.2 1.5" stroke="#f88a84" stroke-width="1.1"/></svg>
<div class="av" style="left:10.6px;top:475.82px"><svg width="18.4" height="18.4" viewBox="0 0 18 18" style="display:block;filter:blur(0.35px)"><rect width="18" height="18" fill="#2a6456"/><path d="M2 5 C6 7 9 5 12 9 C14 12 16 12 17 14" stroke="#d8e8e0" stroke-width="1.3" fill="none"/><circle cx="6" cy="11" r="2" fill="#b0d0c0"/></svg></div>
<div class="pt" style="left:34.6px;top:481.42px;font-size:7.4px;color:#333"><i class="c c3"></i><i class="c c2"></i><i class="c c1"></i><span class="dg">2211283</span></div>
<svg class="abs" style="left:282px;top:480.02px" width="12" height="11" viewBox="0 0 12 11"><rect x="2.7" y="0.5" width="3.6" height="6.2" rx="1.8" fill="#c6c9cc"/><path d="M1.2 4.5 C1.2 7.8 7.8 7.8 7.8 4.5" fill="none" stroke="#cdd0d2" stroke-width="0.9"/><rect x="4.1" y="7.5" width="0.8" height="1.8" fill="#cdd0d2"/><path d="M0.8 9.2 L8.2 1.5" stroke="#f88a84" stroke-width="1.1"/></svg>
<div class="av" style="left:10.6px;top:502.29px"><svg width="18.4" height="18.4" viewBox="0 0 18 18" style="display:block;filter:blur(0.35px)"><rect width="18" height="18" fill="#56607e"/><path d="M4 18 C4 10 7 6 9 6 C11 6 14 10 14 18Z" fill="#1a1a22"/><path d="M12 3 L15 7 L11 6Z" fill="#c0c8e0"/></svg></div>
<div class="pt" style="left:34.6px;top:507.89px;font-size:7.4px;color:#333"><i class="c c3"></i><i class="c c2"></i><i class="c c1"></i><span class="dg">2211327</span></div>
<svg class="abs" style="left:282px;top:506.49px" width="12" height="11" viewBox="0 0 12 11"><rect x="2.7" y="0.5" width="3.6" height="6.2" rx="1.8" fill="#c6c9cc"/><path d="M1.2 4.5 C1.2 7.8 7.8 7.8 7.8 4.5" fill="none" stroke="#cdd0d2" stroke-width="0.9"/><rect x="4.1" y="7.5" width="0.8" height="1.8" fill="#cdd0d2"/><path d="M0.8 9.2 L8.2 1.5" stroke="#f88a84" stroke-width="1.1"/></svg>
<div class="av" style="left:10.6px;top:528.76px"><svg width="18.4" height="18.4" viewBox="0 0 18 18" style="display:block;filter:blur(0.35px)"><rect width="18" height="18" fill="#23304e"/><path d="M5 18 C5 11 7 7 9 7 C11 7 13 11 13 18Z" fill="#f0f0f0"/><path d="M5 8 C5 4 13 4 13 8 L13 13 L11 10 L7 10 L5 13Z" fill="#141414"/><ellipse cx="9" cy="9" rx="2.2" ry="2.6" fill="#e8d0c0"/></svg></div>
<div class="pt" style="left:34.6px;top:534.36px;font-size:7.4px;color:#333"><i class="c c3"></i><i class="c c2"></i><i class="c c1"></i><span class="dg">2212348</span></div>
<svg class="abs" style="left:282px;top:532.96px" width="12" height="11" viewBox="0 0 12 11"><rect x="2.7" y="0.5" width="3.6" height="6.2" rx="1.8" fill="#c6c9cc"/><path d="M1.2 4.5 C1.2 7.8 7.8 7.8 7.8 4.5" fill="none" stroke="#cdd0d2" stroke-width="0.9"/><rect x="4.1" y="7.5" width="0.8" height="1.8" fill="#cdd0d2"/><path d="M0.8 9.2 L8.2 1.5" stroke="#f88a84" stroke-width="1.1"/></svg>
<div class="av" style="left:10.6px;top:555.23px"><svg width="18.4" height="18.4" viewBox="0 0 18 18" style="display:block;filter:blur(0.35px)"><rect width="18" height="18" fill="#c4b4ac"/><path d="M4 18 L8 4 M8 10 L12 3 M10 18 L14 6" stroke="#8a6a5a" stroke-width="1.2"/><rect x="0" y="0" width="18" height="6" fill="#a8b4d0" opacity="0.6"/></svg></div>
<div class="pt" style="left:34.6px;top:560.83px;font-size:7.4px;color:#333"><i class="c c2"></i><i class="c c1"></i><span class="dg">2211277</span></div>
<svg class="abs" style="left:282px;top:559.43px" width="12" height="11" viewBox="0 0 12 11"><rect x="2.7" y="0.5" width="3.6" height="6.2" rx="1.8" fill="#c6c9cc"/><path d="M1.2 4.5 C1.2 7.8 7.8 7.8 7.8 4.5" fill="none" stroke="#cdd0d2" stroke-width="0.9"/><rect x="4.1" y="7.5" width="0.8" height="1.8" fill="#cdd0d2"/><path d="M0.8 9.2 L8.2 1.5" stroke="#f88a84" stroke-width="1.1"/></svg>
<div class="abs" style="left:0;top:581px;width:300px;height:1px;background:#ececec"></div>
<div class="btn" style="left:125.3px;top:591.8px;width:46.8px;background:#0c6cfb;border-color:#0c6cfb;color:#fff"><i class="c c0"></i><i class="c c3"></i><i class="c c2"></i><i class="c c1"></i></div>
<div class="btn" style="left:181.4px;top:591.8px;width:52.7px;color:#1166ee"><i class="c c2"></i><i class="c c1"></i><i class="c c0"></i><i class="c c3"></i><i class="c c2"></i><i class="c c1"></i></div>
<div class="btn" style="left:243.8px;top:591.8px;width:43.1px;color:#1166ee"><i class="c c2"></i><i class="c c1"></i><span style="display:inline-block;margin-left:3px;width:0;height:0;border-left:2px solid transparent;border-right:2px solid transparent;border-top:2.5px solid #1166ee;vertical-align:1.5px"></span></div>
<div class="abs" style="left:-1px;top:617px;width:301px;height:1px;background:#d0d0d0"></div>
</div>
<svg class="abs" style="left:980px;top:0" width="45" height="9" viewBox="980 0 45 9"><path d="M990 3.4 H1019" stroke="#3b4a55" stroke-width="3" stroke-linecap="round"/><path d="M990 3.4 H1007" stroke="#2cb8e8" stroke-width="1.6"/><circle cx="990.5" cy="3.4" r="3.2" fill="#30bdf0" stroke="#25506a" stroke-width="0.7"/></svg>
<!--/PANEL-->
<!--TASK-->
<div id="taskbar">
<div class="abs" style="left:0;top:0;width:1154px;height:1px;background:#333"></div>
<svg class="abs" style="left:9px;top:7px" width="11" height="11" viewBox="0 0 11 11"><path d="M0 1.6 L4.6 1 V5.1 H0Z M5.4 0.9 L11 0 V5.1 H5.4Z M0 5.9 H4.6 V10 L0 9.4Z M5.4 5.9 H11 V11 L5.4 10.1Z" fill="#fff"/></svg>
<svg class="abs" style="left:37px;top:6.5px" width="12" height="12" viewBox="0 0 12 12"><circle cx="6" cy="6" r="4.6" fill="none" stroke="#fff" stroke-width="1.5"/></svg>
<svg class="abs" style="left:66px;top:6.5px" width="12" height="12" viewBox="0 0 12 12"><g fill="none" stroke="#fff" stroke-width="1.1"><rect x="1" y="3" width="6.5" height="6"/><path d="M0 1.2 H8.5 M0 10.8 H8.5 M10 1 V4 M10 5 V7 M10 8 V11"/></g></svg>
<svg class="abs" style="left:95px;top:5.5px" width="16" height="14" viewBox="0 0 16 14"><rect x="4" y="0" width="12" height="14" rx="1" fill="#21a366"/><rect x="4" y="0" width="12" height="4.7" fill="#33c481"/><rect x="4" y="9.3" width="12" height="4.7" fill="#185c37"/><rect x="0" y="2.5" width="9" height="9" rx="1" fill="#107c41"/><path d="M2.3 4.5 L6.7 9.5 M6.7 4.5 L2.3 9.5" stroke="#fff" stroke-width="1.2"/></svg>
<svg class="abs" style="left:125px;top:5.5px" width="15" height="14" viewBox="0 0 15 14"><circle cx="6.3" cy="6.3" r="5" fill="none" stroke="#2b9df2" stroke-width="2"/><path d="M3 11 L1.5 13.5 L5.5 11.5" fill="#2b9df2"/><circle cx="12" cy="10" r="1.8" fill="#f0a020"/><circle cx="10" cy="12" r="1.3" fill="#2fc060"/></svg>
<svg class="abs" style="left:155px;top:5.5px" width="14" height="14" viewBox="0 0 14 14"><rect x="0" y="0" width="14" height="14" fill="#6a70d8"/><rect x="1.5" y="1.5" width="11" height="11" fill="#c8c0e8"/><path d="M3 10 L10 3 L12 5 L6 12Z" fill="#e04a8a"/><path d="M5 11 L9 8 L11 12Z" fill="#40b060"/></svg>
<svg class="abs" style="left:183px;top:5.5px" width="16" height="14" viewBox="0 0 16 14"><circle cx="9" cy="7" r="7" fill="#ed6c47"/><path d="M9 0 A7 7 0 0 1 16 7 H9Z" fill="#ff8f6b"/><path d="M9 7 H16 A7 7 0 0 1 9 14Z" fill="#c43e1c"/><rect x="0" y="2.5" width="9" height="9" rx="1" fill="#c43e1c"/><text x="2.2" y="10" font-family="Liberation Sans" font-weight="bold" font-size="7.5" fill="#fff">P</text></svg>
<svg class="abs" style="left:212px;top:5px" width="17" height="15" viewBox="0 0 17 15"><ellipse cx="6.2" cy="6" rx="6" ry="5" fill="#3ccb4a"/><path d="M2 9.5 L1.5 12 L4.5 10.5Z" fill="#3ccb4a"/><ellipse cx="11.5" cy="10" rx="5" ry="4.2" fill="#e8e8e8"/><circle cx="4.2" cy="5" r="0.8" fill="#1a6a20"/><circle cx="8" cy="5" r="0.8" fill="#1a6a20"/></svg>
<svg class="abs" style="left:242px;top:5.5px" width="16" height="15" viewBox="0 0 16 15"><path d="M13.5 8.8 H4.6 C4.8 11 6.4 12.2 8.3 12.2 C9.8 12.2 11 11.5 11.7 10.4 H13.3 C12.4 12.8 10.5 14 8.2 14 C5 14 2.4 11.5 2.4 8.2 C2.4 4.9 5 2.4 8.2 2.4 C11.4 2.4 13.6 4.8 13.6 8.2 Z M4.7 7.2 H11.5 C11.2 5.4 9.9 4.3 8.1 4.3 C6.4 4.3 5 5.4 4.7 7.2Z" fill="#1ea1f1"/><path d="M1.2 13.5 C0 11.5 3 6 7 3.2 C10.5 0.8 14 -0.3 15.2 1 C16.2 2.1 15.1 4.4 13.6 6.2 C14 4.3 14.2 2.6 13.6 2.1 C12.6 1.3 9.4 2.6 6.6 5 C3.2 8 1.4 12 2.4 13.2 C3 13.9 4.6 13.6 6 13 C4.2 14.4 1.9 14.6 1.2 13.5Z" fill="#f3b32a"/></svg>
<svg class="abs" style="left:272px;top:5.5px" width="15" height="15" viewBox="0 0 16 16"><circle cx="8" cy="8" r="7.5" fill="#db4437"/><path d="M8 8 L1.5 4.2 A7.5 7.5 0 0 0 5.6 15.1Z" fill="#0f9d58"/><path d="M8 8 L5.6 15.1 A7.5 7.5 0 0 0 15.3 6.2 L8 6.2Z" fill="#ffcd40"/><circle cx="8" cy="8" r="3.6" fill="#fff"/><circle cx="8" cy="8" r="2.8" fill="#4285f4"/></svg>
<svg class="abs" style="left:301px;top:5.5px" width="16" height="14" viewBox="0 0 16 14"><rect x="4" y="0" width="12" height="14" rx="1" fill="#2b7cd3"/><rect x="4" y="0" width="12" height="4.7" fill="#41a5ee"/><rect x="4" y="9.3" width="12" height="4.7" fill="#185abd"/><rect x="0" y="2.5" width="9" height="9" rx="1" fill="#185abd"/><text x="0.8" y="10" font-family="Liberation Sans" font-weight="bold" font-size="7" fill="#fff">W</text></svg>
<svg class="abs" style="left:331px;top:5.5px" width="16" height="15" viewBox="0 0 16 15"><path d="M13.5 8.8 H4.6 C4.8 11 6.4 12.2 8.3 12.2 C9.8 12.2 11 11.5 11.7 10.4 H13.3 C12.4 12.8 10.5 14 8.2 14 C5 14 2.4 11.5 2.4 8.2 C2.4 4.9 5 2.4 8.2 2.4 C11.4 2.4 13.6 4.8 13.6 8.2 Z M4.7 7.2 H11.5 C11.2 5.4 9.9 4.3 8.1 4.3 C6.4 4.3 5 5.4 4.7 7.2Z" fill="#1ea1f1"/><path d="M1.2 13.5 C0 11.5 3 6 7 3.2 C10.5 0.8 14 -0.3 15.2 1 C16.2 2.1 15.1 4.4 13.6 6.2 C14 4.3 14.2 2.6 13.6 2.1 C12.6 1.3 9.4 2.6 6.6 5 C3.2 8 1.4 12 2.4 13.2 C3 13.9 4.6 13.6 6 13 C4.2 14.4 1.9 14.6 1.2 13.5Z" fill="#f3b32a"/></svg>
<div class="abs" style="left:353px;top:0;width:26px;height:24px;background:#5a5a5a"></div>
<svg class="abs" style="left:361px;top:5.5px" width="14" height="14" viewBox="0 0 14 14"><rect width="14" height="14" rx="2.5" fill="#1a7af8"/><path d="M2 9 L5 5.5 L7 7.5 L9 5.5 L12 9 L10.5 10.2 L9 8.6 L7 10.5 L5 8.6 L3.5 10.2Z" fill="#fff"/></svg>
<svg class="abs" style="left:389px;top:5.5px" width="15" height="13" viewBox="0 0 15 13"><path d="M0 1 H5 L6.5 2.5 H15 V13 H0Z" fill="#e9b43c"/><rect x="0" y="4" width="15" height="9" fill="#f8d775"/><rect x="4" y="8" width="7" height="5" fill="#3b8de0"/></svg>
<svg class="abs" style="left:420px;top:5.5px" width="14" height="14" viewBox="0 0 14 14"><rect width="14" height="14" fill="#b30b00"/><path d="M2.5 11 C4 9 6 5 6.5 2.5 C7 5 8.5 8 11.5 9.5 C8.5 9 5 9.5 2.5 11Z" fill="none" stroke="#fff" stroke-width="0.9"/></svg>
<div class="abs" style="left:179px;top:22px;width:24px;height:2px;background:#76b9ed"></div>
<div class="abs" style="left:268px;top:22px;width:23px;height:2px;background:#76b9ed"></div>
<div class="abs" style="left:353px;top:22px;width:26px;height:2px;background:#76b9ed"></div>
<div class="abs" style="left:386px;top:22px;width:23px;height:2px;background:#76b9ed"></div>
<div class="abs" style="left:415px;top:22px;width:24px;height:2px;background:#76b9ed"></div>
<svg class="abs" style="left:936px;top:6.5px" width="15" height="10" viewBox="0 0 15 10"><path d="M3 10 C0.5 10 0 7.5 1.8 6.5 C1.5 4 4 3 5.5 4 C6.5 1 11 0.5 12 4 C14.5 4 15.5 7 13.5 9 C13 9.7 12.5 10 11.5 10Z" fill="#a8d4f2"/></svg>
<div class="pt" style="left:955px;top:7.5px;font-size:9px;color:#f2f2f2">22°C</div>
<div class="pt" style="left:979px;top:7.5px;font-size:9px;color:#f2f2f2"><i class="c c2"></i><i class="c c1"></i></div>
<svg class="abs" style="left:1004px;top:9px" width="8" height="6" viewBox="0 0 8 6"><path d="M0.6 5 L4 1.5 L7.4 5" fill="none" stroke="#fff" stroke-width="1"/></svg>
<svg class="abs" style="left:1019px;top:8px" width="11" height="8" viewBox="0 0 11 8"><rect x="0.5" y="0.5" width="9" height="7" fill="#e8e8e8"/><rect x="9.5" y="2.5" width="1.5" height="3" fill="#e8e8e8"/></svg>
<svg class="abs" style="left:1035px;top:7px" width="9" height="10" viewBox="0 0 9 10"><path d="M0.5 9.5 A8.5 8.5 0 0 1 9 1 M2.8 9.5 A6.2 6.2 0 0 1 9 3.3 M5 9.5 A4 4 0 0 1 9 5.5" fill="none" stroke="#9a9a9a" stroke-width="0.9"/></svg>
<svg class="abs" style="left:1048px;top:7px" width="15" height="10" viewBox="0 0 15 10"><rect x="0.5" y="0.5" width="14" height="9" fill="none" stroke="#fff" stroke-width="1"/><path d="M2.5 3 H12.5 M2.5 5 H12.5 M4 7 H11" stroke="#fff" stroke-width="0.9" stroke-dasharray="1 1"/></svg>
<div class="pt" style="left:1066px;top:6.5px;font-size:10px;color:#fff"><i class="c c1"></i></div>
<div class="pt" style="left:1091px;top:2.5px;font-size:7.6px;color:#f2f2f2">9:48</div>
<div class="pt" style="left:1082px;top:13.3px;font-size:7.9px;color:#f2f2f2">2022/3/14</div>
<svg class="abs" style="left:1129px;top:6px" width="12" height="12" viewBox="0 0 12 12"><path d="M0.5 0.5 H11.5 V8.5 H8 L6.5 11 V8.5 H0.5Z" fill="none" stroke="#fff" stroke-width="1"/></svg>
</div>
<!--/TASK-->
<div class="g" style="left:0;top:0;width:72px;height:4px"></div>
<div class="g" style="left:0;top:0;width:4px;height:72px"></div>
<div class="g" style="left:1082px;top:0;width:72px;height:4px"></div>
<div class="g" style="left:1150px;top:0;width:4px;height:72px"></div>
<div class="g" style="left:0;top:646px;width:72px;height:4px"></div>
<div class="g" style="left:0;top:578px;width:4px;height:72px"></div>
<div class="g" style="left:1082px;top:646px;width:72px;height:4px"></div>
<div class="g" style="left:1150px;top:578px;width:4px;height:72px"></div>
</body></html>
